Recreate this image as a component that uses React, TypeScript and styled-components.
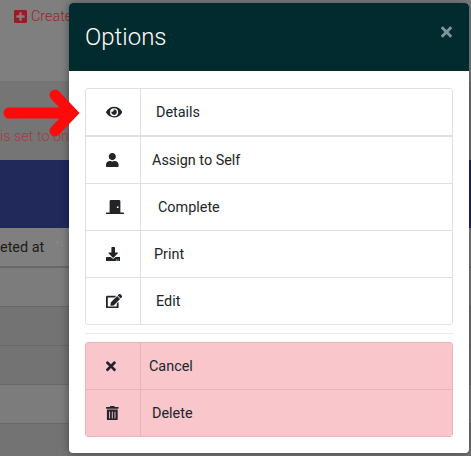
import React from "react";
import styled, { createGlobalStyle } from "styled-components";
import {
  FaDoorClosed,
  FaDownload,
  FaEdit,
  FaEye,
  FaPlusSquare,
  FaTimes,
  FaTrashAlt,
  FaUser,
} from "react-icons/fa";

const GlobalStyle = createGlobalStyle`
  html, body {
    margin: 0;
    padding: 0;
  }
  body {
    width: 471px;
    height: 456px;
    overflow: hidden;
    font-family: Roboto, "Liberation Sans", sans-serif;
    background: #7f7f7f;
  }
`;

const options = [
  { label: "Details", icon: <FaEye />, iconWidth: 16.2, indent: 15, tall: true },
  { label: "Assign to Self", icon: <FaUser />, iconWidth: 12.6, indent: 11 },
  { label: "Complete", icon: <FaDoorClosed />, iconWidth: 18, indent: 17 },
  { label: "Print", icon: <FaDownload />, iconWidth: 14.4, indent: 13 },
  { label: "Edit", icon: <FaEdit />, iconWidth: 16.2, indent: 15 },
];

const dangerOptions = [
  { label: "Cancel", icon: <FaTimes />, iconWidth: 9.9, indent: 8 },
  { label: "Delete", icon: <FaTrashAlt />, iconWidth: 12.6, indent: 11 },
];

function App() {
  return (
    <Page>
      <GlobalStyle />
      <CreateBar>
        <FaPlusSquare />
        <span>Create</span>
      </CreateBar>
      <Notice>
        <span>is set to only</span>
      </Notice>
      <Banner />
      <TableHead>
        <span>eted at</span>
        <SortMark>↑↓</SortMark>
      </TableHead>
      <TableRow />
      <TableRow $dark />
      <TableRow $dark />
      <TableRow />
      <TableRow $dark />
      <Modal>
        <Header>
          <Title>Options</Title>
          <Close>
            <FaTimes />
          </Close>
        </Header>
        <Body>
          <List>
            {options.map((item) => (
              <Row key={item.label} $tall={item.tall}>
                <IconCell $iconWidth={item.iconWidth}>{item.icon}</IconCell>
                <Label $indent={item.indent}>{item.label}</Label>
              </Row>
            ))}
          </List>
          <Divider />
          <List $danger>
            {dangerOptions.map((item) => (
              <Row key={item.label} $danger>
                <IconCell $danger $iconWidth={item.iconWidth}>
                  {item.icon}
                </IconCell>
                <Label $indent={item.indent}>{item.label}</Label>
              </Row>
            ))}
          </List>
        </Body>
      </Modal>
      <Arrow viewBox="0 0 80 50">
        <path
          d="M9 25H70M55 7 72 25 55 43"
          fill="none"
          stroke="#fe0a0a"
          strokeWidth="11"
          strokeLinecap="round"
          strokeLinejoin="miter"
        />
      </Arrow>
    </Page>
  );
}

const Page = styled.div`
  position: relative;
  width: 471px;
  height: 456px;
  overflow: hidden;
`;

const CreateBar = styled.div`
  height: 81px;
  box-sizing: border-box;
  padding: 7px 0 0 14px;
  display: flex;
  align-items: flex-start;
  gap: 4px;
  color: #a0222a;
  font-size: 14.4px;
  font-weight: 300;
  line-height: 19px;

  svg {
    width: 13px;
    height: 15px;
    margin-top: 2px;
    color: #9e1a20;
  }
`;

const Notice = styled.div`
  height: 79px;
  box-sizing: border-box;
  padding-top: 47px;
  background: #757575;
  color: #a13c44;
  font-size: 14.4px;
  font-weight: 300;
  line-height: 17px;
  white-space: nowrap;
`;

const Banner = styled.div`
  height: 68px;
  background: #20295a;
`;

const TableHead = styled.div`
  height: 40px;
  box-sizing: border-box;
  border-bottom: 2px solid #696969;
  display: flex;
  align-items: center;
  color: #1c1c1c;
  font-size: 14.4px;
  white-space: nowrap;
`;

const SortMark = styled.span`
  margin: -8px 0 0 11px;
  font-size: 9px;
  color: #939393;
`;

const TableRow = styled.div<{ $dark?: boolean }>`
  height: 39px;
  box-sizing: border-box;
  border-bottom: 1px solid #686868;
  background: ${(p) => (p.$dark ? "#737373" : "#7c7c7c")};
`;

const Arrow = styled.svg`
  position: absolute;
  left: 0;
  top: 88px;
  width: 80px;
  height: 50px;
`;

const Modal = styled.div`
  position: absolute;
  left: 69px;
  top: 3px;
  width: 400px;
  height: 450px;
  background: #fff;
  border-radius: 4px;
  box-shadow: 0 0 8px rgba(0, 0, 0, 0.4);
`;

const Header = styled.div`
  height: 68px;
  box-sizing: border-box;
  padding: 0 17px 0 16px;
  background: #022b30;
  border-radius: 4px 4px 0 0;
  display: flex;
  align-items: center;
  justify-content: space-between;
`;

const Title = styled.div`
  color: #fff;
  font-size: 24px;
  font-weight: 300;
`;

const Close = styled.div`
  display: flex;
  color: #7f9598;
  margin-bottom: 10px;

  svg {
    width: 11px;
    height: 16px;
  }
`;

const Body = styled.div`
  padding: 17px 16px 0;
`;

const List = styled.div<{ $danger?: boolean }>`
  border: 1px solid ${(p) => (p.$danger ? "#e5b5ba" : "#dfdfdf")};
  border-radius: 3px;
  overflow: hidden;
`;

const Row = styled.div<{ $tall?: boolean; $danger?: boolean }>`
  display: flex;
  height: 47px;
  box-sizing: border-box;
  background: ${(p) => (p.$danger ? "#f8c6cb" : "#fff")};
  border-top: 1px solid ${(p) => (p.$danger ? "#e5b5ba" : "#dfdfdf")};
  color: #212529;
  font-size: 14.4px;

  &:first-child {
    border-top: none;
    height: ${(p) => (p.$tall ? 47 : 46)}px;
  }

  ${(p) => p.$tall && "border-bottom: 1px solid #dfdfdf;"}
`;

const IconCell = styled.div<{ $danger?: boolean; $iconWidth: number }>`
  width: 55px;
  flex: none;
  box-sizing: border-box;
  padding-left: 20px;
  border-right: 1px solid ${(p) => (p.$danger ? "#e5b5ba" : "#dfdfdf")};
  display: flex;
  align-items: center;

  svg {
    width: ${(p) => p.$iconWidth}px;
    height: 14.4px;
  }
`;

const Label = styled.div<{ $indent: number }>`
  display: flex;
  align-items: center;
  padding-left: ${(p) => p.$indent}px;
`;

const Divider = styled.div`
  height: 1px;
  margin: 8px 0;
  background: #e9e9e9;
`;

export default App;
